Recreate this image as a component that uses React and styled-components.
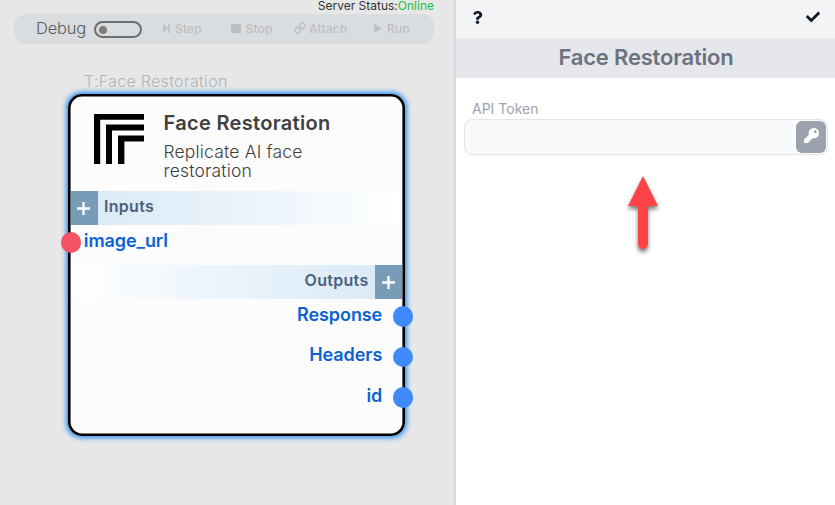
import React from "react";
import styled, { createGlobalStyle } from "styled-components";
import { FaCheck, FaKey, FaQuestion } from "react-icons/fa";
import { Link } from "lucide-react";

const GlobalStyle = createGlobalStyle`
  * { box-sizing: border-box; }
  body { margin: 0; overflow: hidden; font-family: Inter, sans-serif; }
`;

const Page = styled.div`
  display: flex;
  width: 835px;
  height: 505px;
  background: #fff;
`;

const Canvas = styled.section`
  width: 454px;
  flex: none;
  background: #e7e7e7;
`;

const ServerStatus = styled.div`
  height: 14px;
  padding-right: 20px;
  text-align: right;
  font-size: 12px;
  line-height: 12px;
  color: #333;
`;

const Online = styled.span`
  color: #22c145;
`;

const Toolbar = styled.div`
  display: flex;
  align-items: center;
  width: 420px;
  height: 30px;
  margin-left: 14px;
  padding-left: 22px;
  border-radius: 12px;
  background: #d9dde0;
`;

const DebugLabel = styled.span`
  width: 58px;
  padding-bottom: 2px;
  font-size: 16.5px;
  font-weight: 300;
  letter-spacing: -0.2px;
  color: #5b5b5b;
`;

const Toggle = styled.span`
  display: flex;
  align-items: center;
  width: 48px;
  height: 17px;
  margin: 1px 21px 0 0;
  padding-left: 3px;
  border: 2px solid #6d6d6d;
  border-radius: 9px;

  &::before {
    content: "";
    width: 8px;
    height: 8px;
    border-radius: 50%;
    background: #7b7b7b;
  }
`;

const Action = styled.span`
  display: flex;
  align-items: center;
  width: ${(p) => p.$width}px;
  padding-bottom: 1px;
  font-size: 12px;
  font-weight: 500;
  letter-spacing: 0.2px;
  color: #bdbec0;

  svg { flex: none; margin: -1px ${(p) => p.$gap}px 0 0; }
`;

const NodeCaption = styled.div`
  margin: 28px 0 4px 84px;
  height: 18px;
  font-size: 16px;
  line-height: 18px;
  font-weight: 300;
  letter-spacing: 0.3px;
  color: #b3b3b3;
`;

const Node = styled.article`
  width: 337px;
  height: 342px;
  margin-left: 68px;
  padding: 3px 3px 3px 2.5px;
  border-radius: 14px;
  background: #fcfcfc;
  box-shadow: inset 0 0 0 2.6px #000, 0 0 5px 1.5px #2f93f5;
`;

const NodeHeader = styled.header`
  display: flex;
  height: 93.6px;
  padding: 17px 0 0 23.5px;
`;

const Logo = styled.svg`
  width: 50px;
  height: 50px;
  margin-right: 19.5px;
  flex: none;
`;

const NodeTitle = styled.h2`
  margin: -3px 0 7px;
  font-size: 20px;
  line-height: 24px;
  font-weight: 600;
  letter-spacing: 0.32px;
  color: #404040;
`;

const NodeText = styled.p`
  width: 180px;
  margin: 0;
  font-size: 17.5px;
  line-height: 19px;
  font-weight: 300;
  letter-spacing: 0.18px;
  color: #3f3f3f;
`;

const SectionBar = styled.div`
  display: flex;
  flex-direction: ${(p) => (p.$outputs ? "row-reverse" : "row")};
  height: 34px;
  background: linear-gradient(${(p) => (p.$outputs ? "to left" : "to right")}, #d8e9f6 0%, #ebf4fb 55%, #fff 100%);
`;

const AddButton = styled.button`
  display: flex;
  align-items: center;
  justify-content: center;
  width: 27px;
  height: 34px;
  padding: 2px 0 0;
  border: 0;
  background: #789bb7;
`;

const SectionTitle = styled.span`
  padding: 0 6.5px;
  font-size: 16px;
  line-height: 31px;
  font-weight: 600;
  letter-spacing: 0.3px;
  color: #4c617b;
`;

const Ports = styled.div`
  height: ${(p) => p.$height}px;
`;

const Port = styled.div`
  position: relative;
  height: 40.6px;
  padding: 0 19.8px 0 13.3px;
  text-align: ${(p) => (p.$outputs ? "right" : "left")};
  font-size: 18px;
  line-height: 32.7px;
  font-weight: 600;
  letter-spacing: -0.08px;
  color: #0b63d3;

  &::after {
    content: "";
    position: absolute;
    top: 7.6px;
    ${(p) => (p.$outputs ? "right: -11.3px" : "left: -10px")};
    width: 20.6px;
    height: 20.6px;
    border-radius: 50%;
    background: ${(p) => (p.$outputs ? "#3f8afa" : "#f55265")};
  }
`;

const Panel = styled.aside`
  flex: 1;
  border-left: 2px solid #d8dae2;
`;

const PanelTools = styled.div`
  display: flex;
  align-items: center;
  justify-content: space-between;
  height: 38px;
  padding: 0 15px 4px 15px;
  background: #f3f4f6;
  color: #111827;
`;

const PanelTitle = styled.h1`
  height: 40px;
  margin: 0;
  padding-left: 1px;
  text-align: center;
  font-size: 22px;
  line-height: 39px;
  font-weight: 600;
  letter-spacing: -0.2px;
  color: #6b7280;
  background: #e5e7eb;
`;

const Field = styled.div`
  padding: 23px 7px 0 8px;
`;

const FieldLabel = styled.label`
  display: block;
  height: 18px;
  padding-left: 8px;
  font-size: 14px;
  line-height: 16px;
  color: #9ca3af;
`;

const InputBox = styled.div`
  display: flex;
  justify-content: flex-end;
  align-items: center;
  height: 36px;
  padding-right: 1px;
  border: 1px solid #e2e4e9;
  border-radius: 8px;
  background: #f9fafb;
`;

const KeyButton = styled.button`
  display: flex;
  align-items: center;
  justify-content: center;
  width: 30px;
  height: 32px;
  padding: 0 0 3px;
  border: 0;
  border-radius: 6px;
  background: #9ca3af;
  color: #fff;
`;

const Arrow = styled.svg`
  display: block;
  margin: 15px 0 0 162px;
  filter: drop-shadow(0 3px 2px rgba(0, 0, 0, 0.55));
`;

const Plus = () => (
  <svg width="14" height="14" viewBox="0 0 14 14" stroke="#fff" strokeWidth="2.3">
    <path d="M6.5 0v13M0 6.5h13" />
  </svg>
);

export default function App() {
  return (
    <>
      <GlobalStyle />
      <Page>
        <Canvas>
          <ServerStatus>Server Status:<Online>Online</Online></ServerStatus>
          <Toolbar>
            <DebugLabel>Debug</DebugLabel>
            <Toggle />
            <Action $width={68} $gap={5}>
              <svg width="7" height="9" viewBox="0 0 7 9" fill="currentColor">
                <path d="M0 0l5 4.5L0 9zM5 0h1.5v9H5z" />
              </svg>
              Step
            </Action>
            <Action $width={63} $gap={4.5}>
              <svg width="10" height="9" viewBox="0 0 10 9" fill="currentColor">
                <path d="M0 0h10v9H0z" />
              </svg>
              Stop
            </Action>
            <Action $width={80} $gap={3}><Link size={12} strokeWidth={2.6} />Attach</Action>
            <Action $width={45} $gap={5}>
              <svg width="8" height="9" viewBox="0 0 8 9" fill="currentColor">
                <path d="M0 0l8 4.5L0 9z" />
              </svg>
              Run
            </Action>
          </Toolbar>
          <NodeCaption>T:Face Restoration</NodeCaption>
          <Node>
            <NodeHeader>
              <Logo viewBox="0 0 50 50">
                <path d="M0 0h50v5.7H6.2V50H0zM12 10.6h38v6H18V50h-6zM24 21.6h26v6H30.4V50H24z" />
              </Logo>
              <div>
                <NodeTitle>Face Restoration</NodeTitle>
                <NodeText>Replicate AI face restoration</NodeText>
              </div>
            </NodeHeader>
            <SectionBar>
              <AddButton aria-label="Add input"><Plus /></AddButton>
              <SectionTitle>Inputs</SectionTitle>
            </SectionBar>
            <Ports $height={40}><Port>image_url</Port></Ports>
            <SectionBar $outputs>
              <AddButton aria-label="Add output"><Plus /></AddButton>
              <SectionTitle>Outputs</SectionTitle>
            </SectionBar>
            <Ports $height={122}>
              <Port $outputs>Response</Port>
              <Port $outputs>Headers</Port>
              <Port $outputs>id</Port>
            </Ports>
          </Node>
        </Canvas>
        <Panel>
          <PanelTools><FaQuestion size={13} /><FaCheck size={14} /></PanelTools>
          <PanelTitle>Face Restoration</PanelTitle>
          <Field>
            <FieldLabel>API Token</FieldLabel>
            <InputBox>
              <KeyButton aria-label="Choose token"><FaKey size={15} /></KeyButton>
            </InputBox>
            <Arrow width="46" height="84" viewBox="0 0 46 84" fill="#fd4345">
              <path d="M17 6L32 36H22V74a5 5 0 0 1-10 0V36H2z" />
            </Arrow>
          </Field>
        </Panel>
      </Page>
    </>
  );
}
